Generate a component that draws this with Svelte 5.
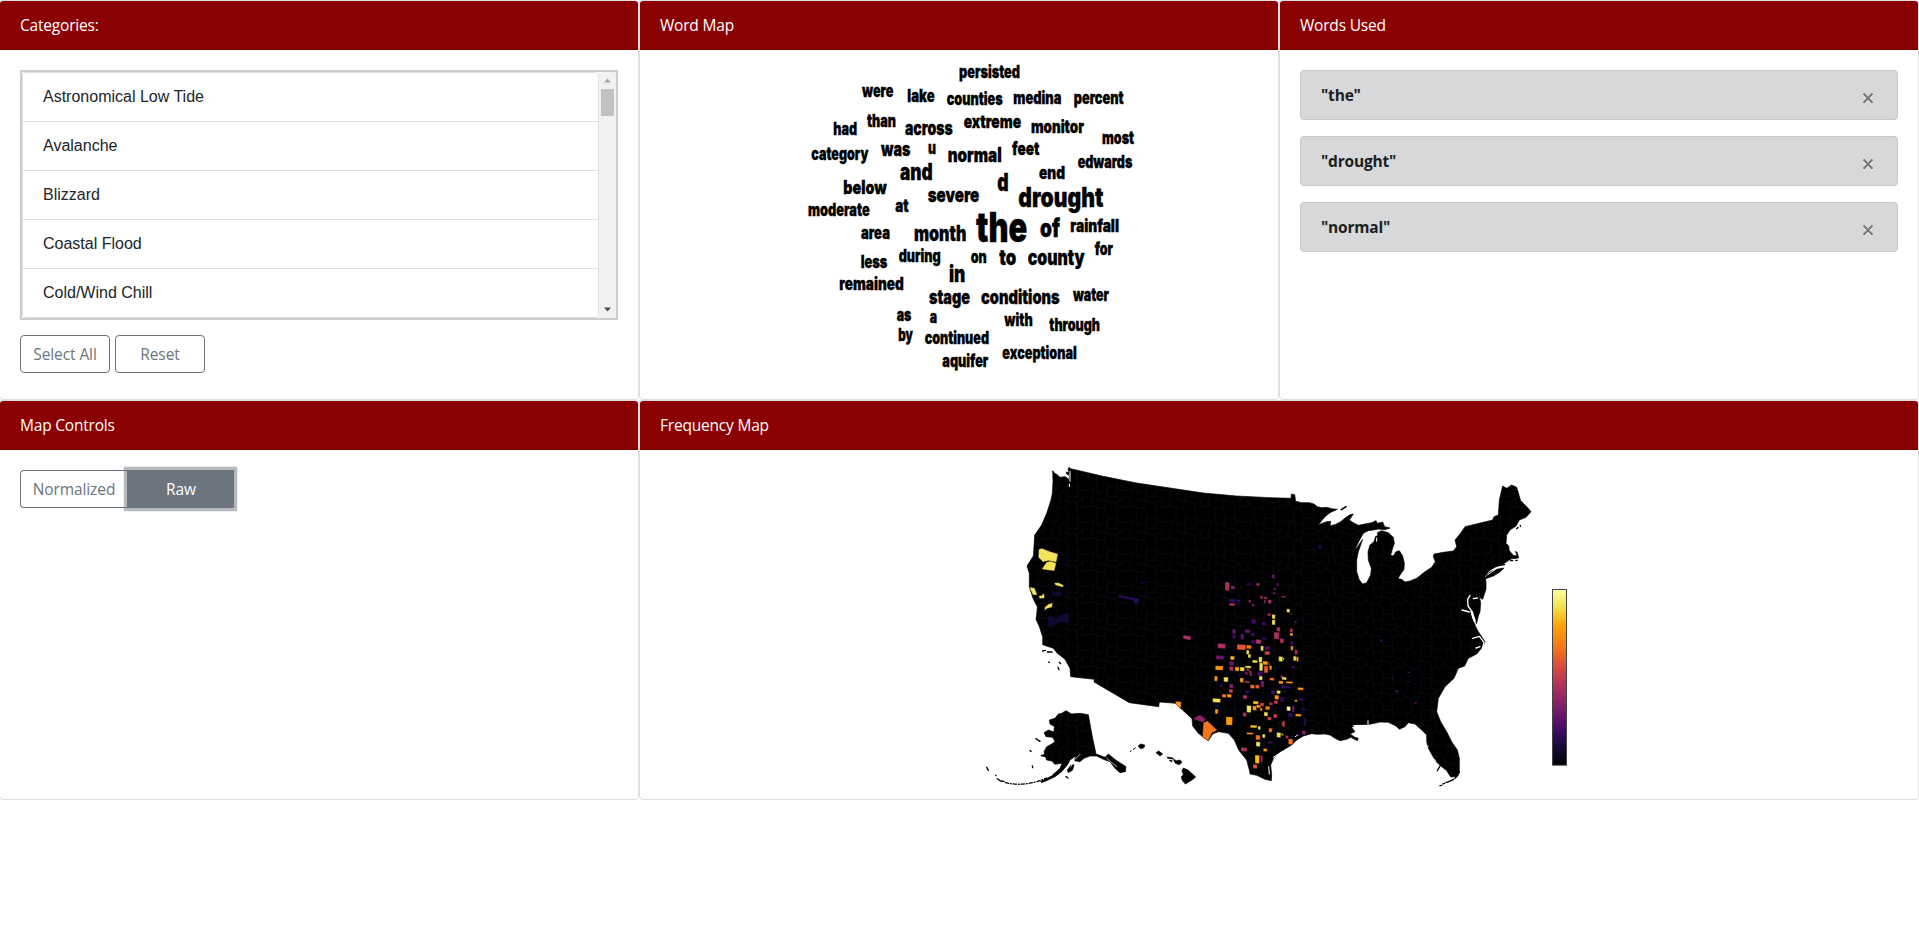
<script>
  const categories = ['Astronomical Low Tide', 'Avalanche', 'Blizzard', 'Coastal Flood', 'Cold/Wind Chill'];
  const used = ['the', 'drought', 'normal'];

  // word, left, right, baseline, letter height (thirds of a pixel for the positions)
  const words = [
    ['persisted', 507, 690, 84, 12.4], ['were', 216, 310, 140, 12.4], ['lake', 352, 434, 156, 12.4],
    ['counties', 470, 638, 164, 12.4], ['medina', 670, 814, 162, 12.4], ['percent', 851, 1001, 162, 12.4],
    ['had', 130, 201, 254, 12.4], ['than', 231, 318, 232, 12.4], ['across', 345, 488, 254, 13.6],
    ['extreme', 521, 693, 234, 13.2], ['monitor', 723, 882, 248, 12.4], ['most', 936, 1032, 282, 12.4],
    ['category', 64, 235, 329, 12.4], ['was', 273, 361, 317, 14.2], ['u', 414, 438, 312, 12.4],
    ['normal', 473, 635, 335, 14.5], ['feet', 666, 748, 314, 13.2], ['edwards', 863, 1027, 353, 12.4],
    ['and', 330, 428, 389, 16.2], ['d', 622, 656, 424, 18], ['end', 747, 825, 387, 13],
    ['below', 160, 290, 431, 13.2], ['severe', 413, 568, 456, 14.8], ['drought', 685, 940, 470, 20],
    ['moderate', 54, 239, 498, 12.4], ['at', 316, 356, 486, 12.4], ['area', 213, 300, 567, 12.4],
    ['month', 372, 529, 572, 15.2], ['the', 558, 712, 575, 30], ['of', 750, 810, 560, 18.5],
    ['rainfall', 841, 987, 546, 12.6], ['for', 914, 969, 614, 12.4], ['less', 212, 292, 654, 12.4],
    ['during', 326, 452, 636, 12.4], ['on', 542, 590, 638, 12.4], ['to', 628, 679, 646, 16],
    ['county', 713, 884, 645, 15.2], ['in', 477, 526, 696, 16.6], ['remained', 148, 341, 720, 12.4],
    ['stage', 417, 540, 761, 14], ['conditions', 573, 809, 761, 14], ['water', 849, 957, 753, 12.4],
    ['as', 320, 364, 813, 12.4], ['a', 419, 441, 820, 12.4], ['with', 643, 728, 828, 12.4],
    ['through', 778, 930, 842, 12.4], ['by', 325, 369, 872, 12.4], ['continued', 404, 597, 882, 12.4],
    ['aquifer', 457, 595, 950, 12.4], ['exceptional', 637, 860, 926, 12.4]
  ];

  // a coastline is kept as runs of points, each run with its own origin
  const trace = (...runs) =>
    'M' + runs.map(([dx, dy, pts]) => pts.trim().split(/\s+/).map((p) => {
      const [x, y] = p.split(',').map(Number);
      return `${x + dx} ${y + dy}`;
    }).join('L')).join('L') + 'Z';

  const mainland = trace(
    [0, 0, '248,62 254,70 262,74 270,82 285,80 292,84 297,90 298,76 290,72 289,67 297,66 294,58 297,52 302,56 400,79 500,99 600,114 700,129 800,138 900,143'],
    [840, 0, '123,145 124,132 134,134 137,154 155,158 178,158'],
    [1020, 90, '12,72 22,80 35,83 50,82 65,86 82,88 60,98 45,110 25,134 50,125 62,124 60,137 75,134 92,125 108,112 120,104 130,102 118,120 130,128 145,136 165,132 185,128 198,122 202,130 218,126 224,140 240,144 225,149 205,147 190,150 175,152 160,160 150,178 135,207 140,204 158,178 145,215 140,240 140,275 148,300 158,312 170,308 182,285 184,265 175,240 174,215 180,195 192,185 196,170 204,166 202,158 215,152 235,158 250,172 253,190 248,205 242,225 250,228 258,215 268,212 278,228 283,250 282,268 270,285 264,296 275,298 285,306 300,303 320,295 345,275 365,262'],
    [1380, 90, '16,245 10,230 12,222 40,217 70,213 80,200 75,180 90,162 105,140 188,120 192,110 205,105 208,60 218,18 230,25 245,15 260,22 272,62 285,75 292,82 303,95 288,112 268,120 258,138 240,150 230,165 228,190 236,198 238,212 250,226 262,228 256,214 262,218 266,234 246,236 238,240 220,252 195,262 178,272 165,290 168,305 168,328 158,358 152,355 146,342 152,368 150,395 145,408 140,430 134,434 145,455 165,485 160,498 140,522 115,535'],
    [1080, 600, '404,48 385,55 372,85 345,110 325,145 320,185 332,215 350,245 365,275 382,300 388,325 388,365 378,380 362,381 350,362 335,350 318,335 308,318 295,295 290,275 290,255 275,240 255,222 235,218 225,230 208,238 198,228 175,217 150,216 115,224 80,224 65,232 75,245 60,252 75,262 85,265 82,272 62,262 50,268 30,272 15,265 0,255'],
    [840, 0, '225,852 200,853 185,851 160,858 140,870 125,885 95,903 72,922 62,945 65,975 64,992 45,988 20,976 0,972'],
    [0, 0, '838,960 830,930 818,915 806,900 793,870 775,850 745,845 728,852 715,872 685,850 668,828 666,806 632,775 618,760 568,756 566,770 478,758 372,696 373,688 302,680 300,655 285,628 262,610 250,595 218,584 218,560 208,530 198,508 200,495 202,470 190,448 178,410 178,370 171,348 190,318 192,290 194,255 215,225 230,190 243,150 247,130 249,95']
  );
  const alaska = trace([30, 750, '208,60 225,55 235,42 245,40 258,32 275,42 300,40 325,44 337,110 348,162 375,172 385,162 410,182 438,200 436,215 420,218 405,205 390,185 370,178 350,168 330,168 312,175 300,185 283,182 287,168 270,180 262,195 245,215 225,230 200,242 185,248 182,244 215,228 240,205 246,190 225,193 215,183 200,180 196,170 184,168 194,162 192,155 200,140 215,132 225,125 218,112 198,110 192,98 205,90 222,96 222,88 224,80 210,72']);
  const islands = [
    trace([1380, 90, '162,298 180,276 200,268 222,264 210,276 190,288']),
    trace([30, 750, '262,210 272,196 282,194 278,210 265,218']),
    trace([30, 750, '474,138 482,132 494,135 492,143 482,146']),
    trace([30, 750, '528,158 536,153 548,162 540,168']),
    trace([30, 750, '562,171 580,174 578,177 563,175']),
    trace([30, 750, '580,178 590,182 600,180 606,187 598,194 586,190']),
    trace([30, 750, '568,181 577,182 574,186']),
    trace([30, 750, '606,212 610,204 624,210 635,220 647,231 636,240 616,252 606,240 604,230 610,224'])
  ];

  const hues = { y: '#f2e35a', g: '#fbb91f', o: '#fc960a', r: '#f3761b', t: '#e15635', c: '#c8404b', m: '#ad305f', p: '#8a226a', v: '#6a176e', d: '#480b6a', i: '#2c0b5c', n: '#110a30', w: '#fbfda0' };

  // plains counties: x, y, width, height, hue
  const plains = [
    [135,66,14,26,'m'],[153,77,12,11,'p'],[200,68,13,9,'i'],[229,69,10,9,'m'],[276,43,9,13,'v'],[289,69,8,10,'v'],[282,83,6,8,'p'],[278,96,9,8,'v'],
    [148,116,18,12,'i'],[168,118,14,9,'i'],[148,129,17,9,'m'],[167,128,14,11,'n'],[206,119,7,9,'m'],[215,131,9,9,'v'],[240,108,9,9,'m'],[252,110,10,8,'m'],[252,119,6,12,'p'],[264,119,11,12,'m'],[303,108,14,5,'m'],
    [320,146,10,12,'y'],[328,160,9,4,'m'],[262,160,12,8,'m'],[276,163,10,14,'y'],[276,179,10,16,'y'],[214,177,14,14,'d'],[246,186,12,11,'d'],[343,183,8,6,'v'],
    [157,207,11,15,'v'],[157,223,10,13,'d'],[182,222,10,17,'v'],[195,208,16,11,'v'],[213,218,12,11,'d'],[290,201,11,14,'m'],[282,216,16,22,'m'],[330,205,9,13,'m'],[330,219,9,9,'g'],[228,238,16,14,'m'],[213,240,12,11,'d'],[246,231,14,9,'i'],[300,235,12,15,'m'],[331,243,9,12,'d'],
    [113,250,24,16,'m'],[171,253,27,17,'t'],[199,255,16,12,'r'],[242,257,9,16,'y'],[254,258,16,13,'d'],[254,273,16,12,'c'],[332,257,8,15,'o'],[344,269,9,15,'m'],[108,286,24,13,'v'],[151,288,13,12,'g'],[148,303,14,14,'v'],[199,270,9,14,'y'],[204,282,9,12,'y'],[296,289,13,16,'y'],[308,293,5,8,'y'],[340,288,9,15,'y'],[349,290,7,15,'g'],
    [217,300,16,9,'y'],[236,290,11,18,'y'],[238,308,11,25,'y'],[248,303,16,12,'o'],[265,307,4,10,'t'],[106,317,24,14,'o'],[148,319,13,14,'m'],[165,320,13,14,'o'],[180,321,14,13,'y'],[196,317,18,8,'y'],[252,317,13,22,'t'],[268,316,8,14,'o'],[334,317,12,8,'d'],[200,324,9,10,'m'],[207,332,8,10,'m'],[195,334,9,12,'v'],[232,334,16,14,'d'],
    [103,348,10,16,'o'],[131,351,14,15,'y'],[180,353,11,15,'o'],[194,363,15,6,'c'],[209,339,8,10,'p'],[237,348,11,13,'y'],[269,353,14,9,'r'],[148,371,12,14,'p'],[116,369,14,14,'n'],[171,342,11,8,'n'],[147,387,12,12,'c'],[211,374,13,12,'r'],[226,374,13,12,'t'],[242,362,11,20,'v'],[302,346,10,10,'m'],[306,351,14,9,'y'],[296,362,14,10,'o'],[318,364,21,7,'o'],[353,382,18,9,'o'],
    [195,389,13,12,'i'],[189,405,13,12,'m'],[126,402,13,11,'r'],[141,402,14,11,'o'],[273,390,12,14,'d'],[290,391,12,11,'y'],[303,374,15,13,'i'],[319,377,15,9,'i'],[284,405,13,14,'o'],[304,390,14,9,'n'],[98,415,24,13,'y'],[344,419,8,7,'g'],[356,415,18,8,'i'],[104,431,15,14,'n'],[105,447,10,15,'o'],[200,436,14,22,'y'],[219,423,17,10,'g'],[218,437,12,15,'o'],[229,434,14,10,'o'],[240,428,13,11,'c'],[267,427,12,9,'m'],[282,421,12,11,'c'],[256,438,14,12,'r'],[300,410,12,16,'i'],[320,439,12,14,'w'],[336,438,8,19,'v'],
    [252,456,12,13,'y'],[240,444,8,9,'o'],[280,462,12,12,'c'],[262,470,13,11,'c'],[188,457,12,13,'m'],[138,470,20,26,'o'],[211,495,20,9,'g'],[234,498,8,12,'y'],[200,517,20,7,'o'],[324,458,15,14,'i'],[346,461,18,9,'o'],[364,444,13,8,'i'],[372,474,7,24,'i'],[305,485,10,14,'c'],[309,482,5,20,'t'],[266,504,11,13,'r'],[290,517,13,16,'y'],[303,520,8,7,'o'],[247,522,9,12,'y'],[227,525,14,15,'r'],[228,545,13,15,'y'],[263,544,14,7,'d'],[250,565,12,10,'o'],[316,526,10,10,'m'],[325,536,14,18,'r'],[366,511,12,13,'p'],[354,520,10,8,'i'],[183,562,18,13,'m'],[225,585,14,26,'g'],[241,586,8,22,'p'],[219,613,13,13,'t']
  ];

  // isolated counties elsewhere in the country
  const others = [
    [1046,284,8,14,'i'],[1276,519,5,4,'i'],[1261,543,5,4,'i'],[1230,567,9,10,'i'],[1312,665,8,5,'v'],[1330,655,5,5,'i'],[1265,683,7,5,'v'],[1314,695,5,5,'i'],[1276,721,10,6,'v'],[1332,757,10,5,'v'],[1288,686,6,5,'n'],[515,397,6,7,'i'],[521,395,6,5,'i']
  ];
</script>

{#snippet county([x, y, w, h, k])}
  <path d="M{x} {y}l{w} 1l-1 {h - 1}l{-w + 1} -1z" fill={hues[k]} />
{/snippet}

<main>
  <section class="card">
    <header>Categories:</header>
    <div class="body">
      <div class="scroller">
        <ul>
          {#each categories as c}<li>{c}</li>{/each}
        </ul>
        <div class="bar">
          <svg width="17" height="17"><path d="M5 10.500h7L8.500 6.500z" fill="#a3a3a3" /></svg>
          <div class="thumb"></div>
          <svg class="down" width="17" height="17"><path d="M5 6.500h7L8.500 10.500z" fill="#505050" /></svg>
        </div>
      </div>
      <div class="buttons">
        <button>Select All</button>
        <button>Reset</button>
      </div>
    </div>
  </section>

  <section class="card">
    <header>Word Map</header>
    <svg class="fill" viewBox="640 50 638 349">
      {#each words as [word, x0, x1, base, h]}
        <text x={790 + x0 / 3} y={50 + base / 3} font-size={h * 1.38} textLength={(x1 - x0) / 3} lengthAdjust="spacingAndGlyphs">{word}</text>
      {/each}
    </svg>
  </section>

  <section class="card">
    <header>Words Used</header>
    <div class="body">
      {#each used as w}
        <div class="alert">
          <strong>"{w}"</strong>
          <svg width="12" height="13" viewBox="0 0 12 13">
            <path d="M1.500 2.500l9 9.500M10.500 2.500l-9 9.500" stroke="#fff" stroke-width="2" />
            <path d="M1.500 1.500l9 9.500M10.500 1.500l-9 9.500" stroke="#777879" stroke-width="2.100" />
          </svg>
        </div>
      {/each}
    </div>
  </section>

  <section class="card">
    <header>Map Controls</header>
    <div class="body">
      <div class="group">
        <button>Normalized</button>
        <button class="active">Raw</button>
      </div>
    </div>
  </section>

  <section class="card wide">
    <header>Frequency Map</header>
    <svg class="fill" viewBox="-990 0 3834 1047">
      <defs>
        <linearGradient id="scale" x1="0" y1="0" x2="0" y2="1">
          <stop offset="0" stop-color="#fcffa4" />
          <stop offset=".1" stop-color="#f1e14c" />
          <stop offset=".2" stop-color="#fca50a" />
          <stop offset=".33" stop-color="#f5761a" />
          <stop offset=".45" stop-color="#d44842" />
          <stop offset=".56" stop-color="#ab2f5e" />
          <stop offset=".68" stop-color="#781c6d" />
          <stop offset=".8" stop-color="#420a68" />
          <stop offset=".9" stop-color="#140b35" />
          <stop offset="1" stop-color="#000004" />
        </linearGradient>
        <pattern id="lines" width="118" height="96" patternUnits="userSpaceOnUse">
          <rect width="118" height="96" fill="#000003" />
          <path d="M0 22h26l5 8 24-3 3-14h30l4 11h26M14 22v24l-8 9 6 17 14 3 2 21M12 72H0M31 30l3 23 20 4 4-30M54 57l-5 22H26M58 13V0M28 0v14l-2 8M88 13V0M88 13l-3 30 18 6 15-5M85 43l-27 3M54 57l30 6 3 33M84 63l19-14M49 79l7 17M103 49l-2 26 17 3M101 75l-14 5" fill="none" stroke="#111110" stroke-width="1.500" />
        </pattern>
      </defs>

      <g fill="url(#lines)" stroke="#000" stroke-width="2" stroke-linejoin="round">
        <path d={mainland} />
        <path d={alaska} />
        {#each islands as d}<path {d} />{/each}
      </g>

      <g fill="none" stroke="#000" stroke-width="4" stroke-linecap="round">
        <path d="M1114 179l14-9" stroke-width="5" />
        <path d="M1622 332h6M1637 331h5M1640 318l2 4M1584 347l20-3M1651 226v3M1640 236l4-4" />
        <path d="M218 603l8-2M232 606h14M236 636l2 1M264 652l3 7M268 637l4 4" />
        <path d="M198 866l12 8M180 902l3 2M187 948l1 5M214 916l10 1M50 952l5 9M77 976l1 1M82 986l9 7M94 993l8 1M254 970l-4 6M288 980l6 4" />
        <path d="M106 998q60 14 124-14" stroke-dasharray="10 6 2 6" />
        <path d="M481 904l2-1M490 898l6-4" stroke-width="3" />
        <path d="M1468 966q-6 20-30 28l-20 8M1410 1007l5-1" stroke-dasharray="24 5" />
        <path d="M1402 962l8-14" />
      </g>

      <g fill="none" stroke="#fff" stroke-linecap="round" stroke-linejoin="round">
        <path d="M1500 436l-7 12 1 20 10 14 4 20 8 18M1476 480l22 6M1510 446l12-2" stroke-width="4" />
        <path d="M1505 485l9 28" stroke-width="7" />
        <path d="M1508 565l20-6 14 18-4 16M1518 594l12-4" stroke-width="4" />
        <path d="M1194 812v12M1150 827l56-1M1158 838l12 0-2 10" stroke-width="3" />
        <path d="M896 950l2 22M910 922l24-16M976 860l8-6" stroke-width="3" />
        <path d="M300 64v30M298 102v8M1210 244l-6 12M1220 264l0 10M1216 254l-6 14" stroke-width="3" />
        <path d="M1555 373l22-15M1374 888l-2 10M1394 928l4 8" stroke-width="2.500" />
        <path d="M330 913l-16 16-12 22M410 925l30 25" stroke-width="2" />
      </g>

      <g stroke="#000" stroke-width="1">
        <path d="M206 298l10-3 20 8 28 9-5 25-24-5-16 4-14-14z M217 355l12-18 12-4 18 6-6 24-38-5z M178 411l16 3 8 22-14-2z M206 438l10-2 6-6 2 14-15 2z M252 398l14 0 15 8-2 6-22-6z M224 472l12-10 12-4-2 14-16 4-6 6z" fill="#f2e35a" />
        <path d="M244 424l30 0 4 12-22 4-10-4zM232 502l10-6 14 10 18-12 22-8 2 32-28-2-24 14-12 2z" fill="#110a30" />
        <path d="M445 434l48 10 14 2-2 12-10 4-4-10-46-10z" fill="#2c0b5c" />
        <path d="M640 555l23 4-1 12-23-5z" fill="#ad305f" />
        <path d="M616 754l18 1-2 22-14-16z" fill="#fc960a" />
        <path d="M668 806l22-12 18 14-8 10z" fill="#8a226a" />
        <path d="M700 818l12-6 30 29-16 8-11 23-18-10z" fill="#f3761b" />
        <g transform="translate(630 330)">
          {#each plains as p}{@render county(p)}{/each}
        </g>
        {#each others as p}{@render county(p)}{/each}
      </g>
      <rect x="1747.500" y="418.500" width="42" height="527" fill="url(#scale)" stroke="#444" stroke-width="3" />
    </svg>
  </section>
</main>

<style>
  :global(body) { margin: 0; background: #fff; overflow: hidden; }
  main {
    display: grid;
    grid-template-columns: repeat(3, 640px);
    grid-auto-rows: 400px;
    margin-left: -1px;
    font: 15.500px/24px "Open Sans", "Noto Sans", sans-serif;
    letter-spacing: -0.200px;
    color: #212529;
  }
  .card {
    box-sizing: border-box;
    display: flex;
    flex-direction: column;
    border: 1px solid #dfdfdf;
    border-radius: 4px;
    overflow: hidden;
    background: #fff;
  }
  .wide { grid-column: span 2; }
  header {
    padding: 12px 20px;
    color: #fff;
    background: #8b0000;
    border-bottom: 1px solid #7a0000;
  }
  .body { padding: 20px; }
  .fill { display: block; width: 100%; height: 349px; }
  text {
    font-family: Inter, "Open Sans", sans-serif;
    font-weight: 900;
    letter-spacing: 0;
    fill: #000;
    stroke: #000;
    stroke-width: 0.350px;
  }
  .scroller {
    box-sizing: border-box;
    display: flex;
    height: 250px;
    border: 2px solid #ccc;
  }
  ul {
    flex: 1;
    margin: 0;
    padding: 0;
    list-style: none;
    border: 1px solid #dfdfdf;
    border-radius: 4px;
    font: 16px/24px "Liberation Sans", Arial, sans-serif;
    letter-spacing: 0;
  }
  li { padding: 12px 20px; }
  li + li { border-top: 1px solid #dfdfdf; }
  .bar { display: flex; flex-direction: column; width: 17px; background: #f1f1f1; }
  .thumb { height: 27px; margin: 0 2px; background: #c1c1c1; }
  .down { margin-top: auto; }
  .buttons { display: flex; gap: 5px; margin-top: 15px; }
  button {
    box-sizing: border-box;
    width: 90px;
    height: 38px;
    padding: 0;
    border: 1px solid #6c757d;
    border-radius: 4px;
    background: #fff;
    color: #6c757d;
    font: inherit;
    letter-spacing: -0.100px;
    white-space: nowrap;
  }
  .group { display: flex; }
  .group button { width: 107px; border-radius: 4px 0 0 4px; border-right: 0; }
  .group .active {
    border-radius: 0;
    background: #6c757d;
    color: #fff;
    box-shadow: 0 0 0 3.200px rgba(108, 117, 125, 0.5);
  }
  .alert {
    box-sizing: border-box;
    display: flex;
    align-items: center;
    justify-content: space-between;
    height: 50px;
    margin-bottom: 16px;
    padding: 0 23px 0 20px;
    color: #1b1e21;
    background: #d6d8d9;
    border: 1px solid #c6c8ca;
    border-radius: 4px;
  }
  .alert svg { margin-top: 6px; }
</style>
